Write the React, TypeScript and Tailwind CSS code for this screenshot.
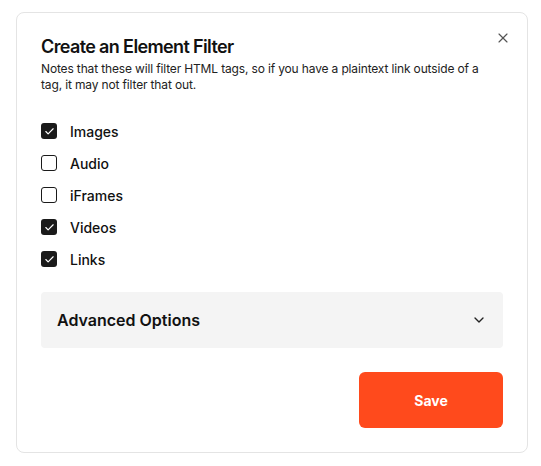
import React, { useState } from 'react';
import { X, ChevronDown, Check } from 'lucide-react';

const items = [
  { label: 'Images', on: true },
  { label: 'Audio', on: false },
  { label: 'iFrames', on: false },
  { label: 'Videos', on: true },
  { label: 'Links', on: true },
];

export default function App() {
  const [state, setState] = useState(items.map((i) => i.on));

  return (
    <div className="min-h-screen bg-white pt-3 pl-4 font-['Inter',sans-serif] text-[#111]">
      <div className="relative w-[512px] h-[441px] rounded-lg border border-[#e4e4e4] bg-white px-6 pt-5 pb-6 flex flex-col">
        <button className="absolute top-[17px] right-[16px] text-[#555]">
          <X size={16} strokeWidth={1.75} />
        </button>
        <h1 className="text-[18px] font-semibold leading-7 tracking-[-0.035em]">Create an Element Filter</h1>
        <p className="max-w-[450px] text-[12px] leading-4 text-[#222] tracking-[-0.15px]">
          Notes that these will filter HTML tags, so if you have a plaintext link outside of a tag, it may not filter that out.
        </p>
        <div className="mt-[26px] flex flex-col gap-2">
          {items.map((item, i) => (
            <label key={item.label} className="flex items-center gap-[13px] h-6 cursor-pointer">
              <span
                onClick={() => setState((s) => s.map((v, j) => (j === i ? !v : v)))}
                className={
                  state[i]
                    ? 'w-4 h-4 rounded-[3px] bg-[#1a1a1a] flex items-center justify-center'
                    : 'w-4 h-4 rounded-[3px] border border-[#1a1a1a] bg-white'
                }
              >
                {state[i] && <Check size={11} strokeWidth={2.5} className="text-white" />}
              </span>
              <span className="text-[14px] font-medium">{item.label}</span>
            </label>
          ))}
        </div>
        <div className="mt-[21px] h-14 rounded-[4px] bg-[#f4f4f4] px-4 flex items-center justify-between">
          <span className="text-[16px] font-semibold">Advanced Options</span>
          <ChevronDown size={16} strokeWidth={2} className="text-[#222]" />
        </div>
        <div className="mt-6 flex justify-end">
          <button className="w-36 h-14 rounded-md bg-[#ff4a1c] text-white text-[14px] font-bold">Save</button>
        </div>
      </div>
    </div>
  );
}
